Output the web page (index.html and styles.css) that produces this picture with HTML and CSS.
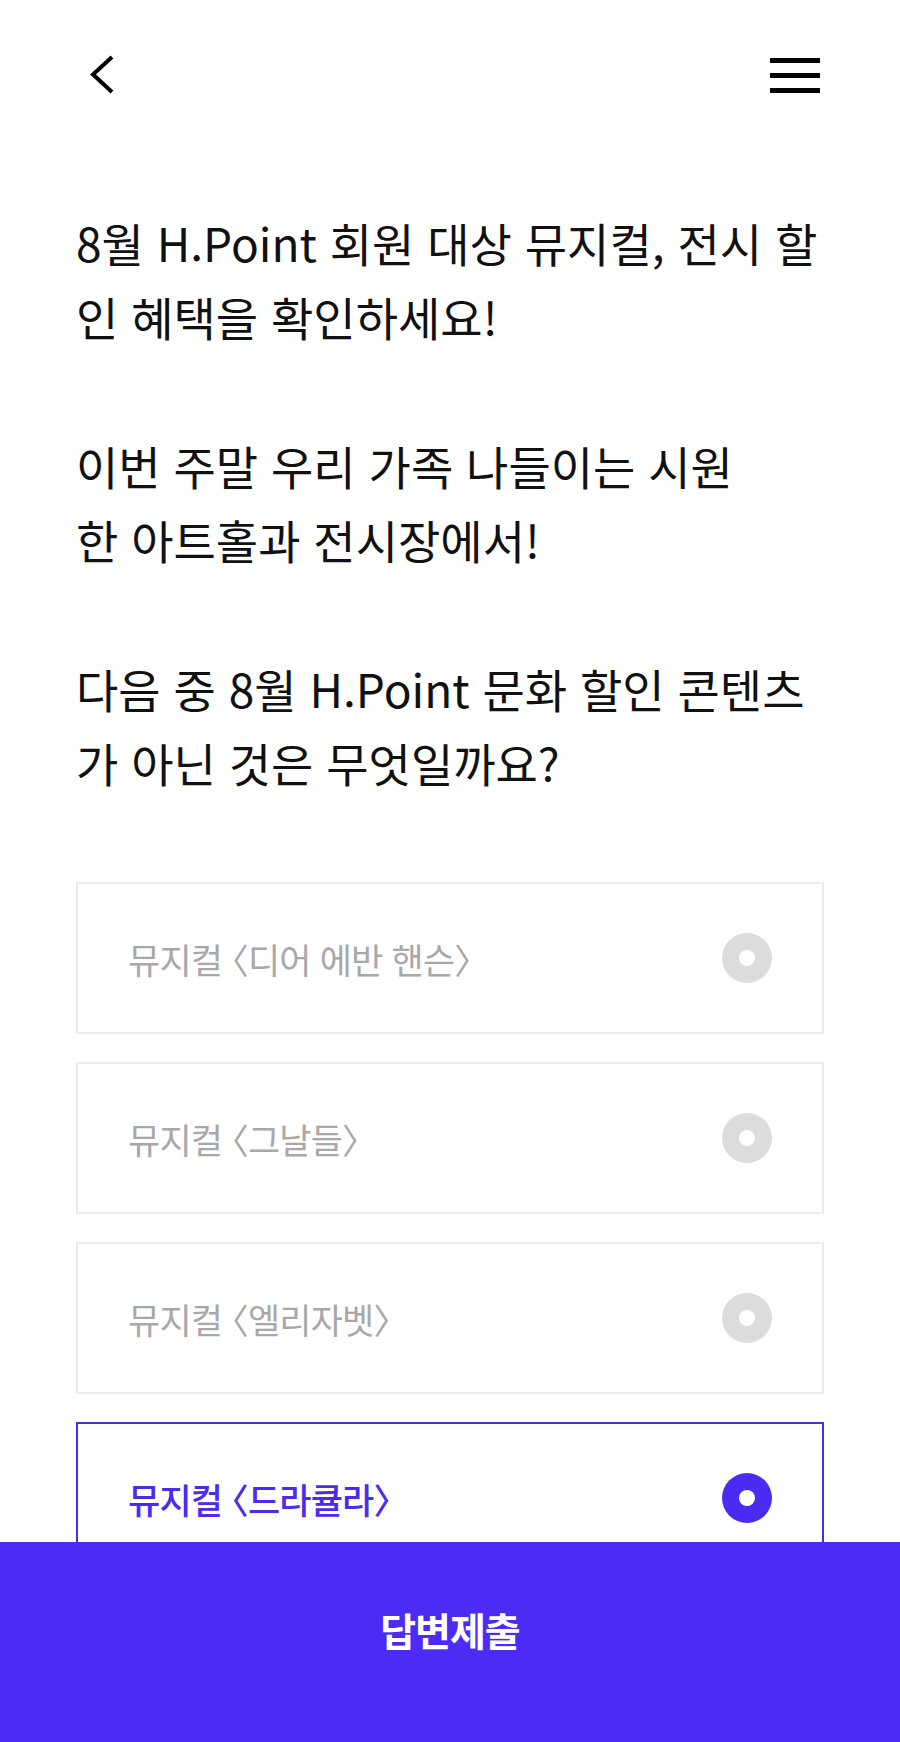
FILE: index.html
```html
<!DOCTYPE html>
<html lang="ko">
<head>
<meta charset="utf-8">
<title>퀴즈</title>
<link rel="stylesheet" href="styles.css">
</head>
<body>
<div class="page">
  <header class="topbar">
    <button class="icon-btn back" aria-label="뒤로">
      <svg width="30" height="44" viewBox="0 0 30 44"><polyline points="24,4 5,21.5 24,39" fill="none" stroke="#000" stroke-width="4" stroke-linejoin="miter"/></svg>
    </button>
    <button class="icon-btn menu" aria-label="메뉴">
      <span class="bar"></span><span class="bar"></span><span class="bar"></span>
    </button>
  </header>

  <main class="content">
    <div class="question">
      <p>8월 H.Point 회원 대상 뮤지컬, 전시 할<br>인 혜택을 확인하세요!</p>
      <p>이번 주말 우리 가족 나들이는 시원<br>한 아트홀과 전시장에서!</p>
      <p>다음 중 8월 H.Point 문화 할인 콘텐츠<br>가 아닌 것은 무엇일까요?</p>
    </div>

    <ul class="options">
      <li class="option"><span class="label">뮤지컬 〈디어 에반 핸슨〉</span><span class="radio"></span></li>
      <li class="option"><span class="label">뮤지컬 〈그날들〉</span><span class="radio"></span></li>
      <li class="option"><span class="label">뮤지컬 〈엘리자벳〉</span><span class="radio"></span></li>
      <li class="option selected"><span class="label">뮤지컬 〈드라큘라〉</span><span class="radio"></span></li>
    </ul>
  </main>

  <footer class="submit-bar">
    <button class="submit">답변제출</button>
  </footer>
</div>
</body>
</html>
```

FILE: styles.css
```css
* { box-sizing: border-box; }
html, body {
  margin: 0;
  padding: 0;
  background: #fff;
}
body {
  font-family: "Noto Sans CJK KR", "Noto Sans", sans-serif;
  color: #111;
  width: 900px;
  height: 1742px;
  overflow: hidden;
}
.page {
  width: 900px;
  min-height: 1742px;
}
.topbar {
  height: 150px;
  display: flex;
  align-items: center;
  justify-content: space-between;
  padding: 0 80px 0 88px;
}
.icon-btn {
  background: none;
  border: 0;
  padding: 0;
  margin: 0;
  cursor: pointer;
}
.back svg { display: block; }
.menu {
  display: flex;
  flex-direction: column;
  gap: 10px;
  width: 50px;
}
.menu .bar {
  display: block;
  width: 50px;
  height: 5px;
  background: #000;
}
.content {
  padding: 0 76px;
}
.question {
  padding-top: 55px;
}
.question p {
  margin: 0 0 75px;
  font-size: 46px;
  line-height: 74px;
  font-weight: 400;
  letter-spacing: 0;
  white-space: nowrap;
  color: #111;
}
.question p:last-child { margin-bottom: 0; }
.options {
  list-style: none;
  margin: 83px 0 0;
  padding: 0;
  display: flex;
  flex-direction: column;
  gap: 28px;
}
.option {
  height: 152px;
  border: 2px solid #ebebeb;
  display: flex;
  align-items: center;
  justify-content: space-between;
  padding: 0 50px 0 50px;
  background: #fff;
}
.label {
  font-size: 35px;
  color: #a8a8a8;
  letter-spacing: -0.8px;
  font-feature-settings: "halt";
}
.radio {
  width: 50px;
  height: 50px;
  border-radius: 50%;
  background: #dcdcdc;
  display: flex;
  align-items: center;
  justify-content: center;
}
.radio::after {
  content: "";
  width: 16px;
  height: 16px;
  border-radius: 50%;
  background: #fff;
}
.option.selected {
  border-color: #4b2bee;
}
.option.selected .label {
  color: #4b2bee;
  font-weight: 500;
}
.option.selected .radio {
  background: #4b2bf2;
}
.submit-bar {
  position: fixed;
  left: 0;
  right: 0;
  bottom: 0;
  height: 200px;
  background: #4c2bf4;
  padding-top: 60px;
}
.submit {
  display: block;
  width: 100%;
  height: 54px;
  border: 0;
  background: none;
  color: #fff;
  font-family: "Noto Sans CJK KR", "Noto Sans", sans-serif;
  font-size: 39px;
  font-weight: 700;
  line-height: 54px;
  padding: 0;
  letter-spacing: -1px;
}
```
